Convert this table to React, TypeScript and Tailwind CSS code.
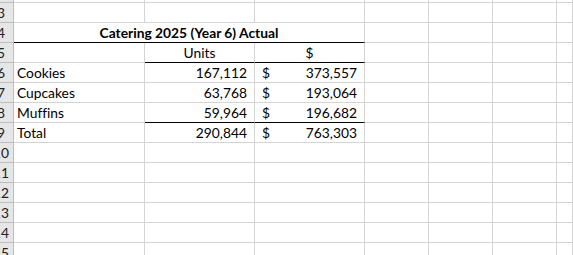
import React from "react";

type Cell = {
  text?: string;
  align?: "left" | "right" | "center";
  bold?: boolean;
  money?: boolean;
  underline?: boolean;
  span?: number;
};

const rows: { n: number; cells: Cell[] }[] = [
  { n: 3, cells: [] },
  {
    n: 4,
    cells: [{ text: "Catering 2025 (Year 6) Actual", align: "center", bold: true, span: 3, underline: true }],
  },
  {
    n: 5,
    cells: [{}, { text: "Units", align: "center", underline: true }, { text: "$", align: "center", underline: true }],
  },
  { n: 6, cells: [{ text: "Cookies" }, { text: "167,112", align: "right" }, { text: "373,557", money: true }] },
  { n: 7, cells: [{ text: "Cupcakes" }, { text: "63,768", align: "right" }, { text: "193,064", money: true }] },
  {
    n: 8,
    cells: [
      { text: "Muffins" },
      { text: "59,964", align: "right", underline: true },
      { text: "196,682", money: true, underline: true },
    ],
  },
  { n: 9, cells: [{ text: "Total" }, { text: "290,844", align: "right" }, { text: "763,303", money: true }] },
  { n: 10, cells: [] },
  { n: 11, cells: [] },
  { n: 12, cells: [] },
  { n: 13, cells: [] },
  { n: 14, cells: [] },
  { n: 15, cells: [] },
];

const Row = ({ n, cells }: { n: number; cells: Cell[] }) => {
  const filled: Cell[] = [...cells];
  let used = filled.reduce((s, c) => s + (c.span ?? 1), 0);
  while (used < 7) {
    filled.push({});
    used++;
  }
  return (
    <div className="grid h-[20px] grid-cols-[14px_131px_110px_110px_64px_64px_64px_1fr]">
      <div className="flex h-[20px] items-end overflow-hidden border-r border-b border-[#bdbdbd] bg-[#e6e6e6] pb-[1px]">
        <div className="ml-[-13px] w-[28px] shrink-0 text-center leading-[17px] text-[#222]">{n}</div>
      </div>
      {filled.map((c, i) => (
        <div
          key={i}
          className={`flex h-[20px] items-end overflow-visible whitespace-nowrap border-r border-b pb-[1px] leading-[17px] ${
            c.underline ? "border-b-black" : "border-b-[#d4d4d4]"
          } border-r-[#d4d4d4] ${c.span === 3 ? "col-span-3" : ""} ${
            c.align === "center" ? "justify-center" : c.align === "right" ? "justify-end pr-[7px]" : "pl-[3px]"
          } ${c.money ? "justify-between pl-[7px] pr-[7px]" : ""} ${c.bold ? "font-bold" : ""}`}
        >
          {c.money ? (
            <>
              <span>$</span>
              <span>{c.text}</span>
            </>
          ) : (
            c.text
          )}
        </div>
      ))}
    </div>
  );
};

export default function App() {
  return (
    <div className="h-[255px] w-[573px] overflow-hidden bg-white font-['Lato',sans-serif] text-[13.8px] text-black [font-variant-ligatures:none]">
      <div className="grid h-[3px] grid-cols-[14px_131px_110px_110px_64px_64px_64px_1fr]">
        <div className="border-r border-b border-[#bdbdbd] bg-[#e6e6e6]" />
        {Array.from({ length: 7 }).map((_, i) => (
          <div key={i} className="border-r border-b border-[#d4d4d4]" />
        ))}
      </div>
      {rows.map((r) => (
        <Row key={r.n} n={r.n} cells={r.cells} />
      ))}
    </div>
  );
}
